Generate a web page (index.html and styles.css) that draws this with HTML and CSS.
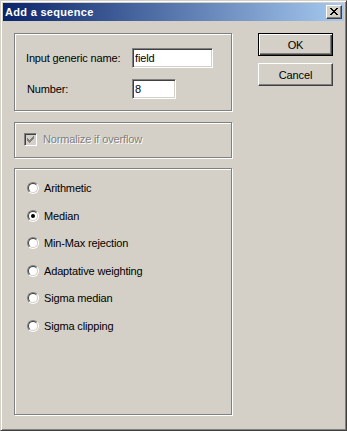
FILE: index.html
```html
<!DOCTYPE html>
<html lang="en">
<head>
  <meta charset="UTF-8" />
  <title>Add a sequence</title>
  <link rel="stylesheet" href="styles.css">
</head>
<body>

<div class="window">
  <div class="titlebar">
    <span class="title">Add a sequence</span>
    <span class="close-btn">
      <svg width="8" height="7" viewBox="0 0 8 7" shape-rendering="crispEdges">
        <path fill="#000" d="M0 0h2v1h-2z M6 0h2v1h-2z M1 1h2v1h-2z M5 1h2v1h-2z M2 2h4v1h-4z M3 3h2v1h-2z M2 4h4v1h-4z M1 5h2v1h-2z M5 5h2v1h-2z M0 6h2v1h-2z M6 6h2v1h-2z"/>
      </svg>
    </span>
  </div>

  <div class="client">
    <div class="left-col">
      <div class="group group-names">
        <div class="field-row">
          <label class="field-label">Input generic name:</label>
          <input class="textbox textbox-wide" type="text" value="field">
        </div>
        <div class="field-row">
          <label class="field-label label-number">Number:</label>
          <input class="textbox textbox-short" type="text" value="8">
        </div>
      </div>

      <div class="group group-check">
        <span class="checkbox">
          <svg width="7" height="7" viewBox="0 0 7 7" shape-rendering="crispEdges">
            <path fill="#808080" d="M6 0h1v1h-1z M5 1h2v1h-2z M0 2h1v1h-1z M4 2h3v1h-3z M0 3h2v1h-2z M3 3h3v1h-3z M0 4h5v1h-5z M1 5h3v1h-3z M2 6h1v1h-1z"/>
          </svg>
        </span>
        <span class="disabled-label">Normalize if overflow</span>
      </div>

      <div class="group group-methods">
        <div class="radio-row"><span class="radio"><span class="radio-inner"></span></span><span>Arithmetic</span></div>
        <div class="radio-row"><span class="radio"><span class="radio-inner"><span class="radio-dot"></span></span></span><span>Median</span></div>
        <div class="radio-row"><span class="radio"><span class="radio-inner"></span></span><span>Min-Max rejection</span></div>
        <div class="radio-row"><span class="radio"><span class="radio-inner"></span></span><span>Adaptative weighting</span></div>
        <div class="radio-row"><span class="radio"><span class="radio-inner"></span></span><span>Sigma median</span></div>
        <div class="radio-row"><span class="radio"><span class="radio-inner"></span></span><span>Sigma clipping</span></div>
      </div>
    </div>

    <div class="right-col">
      <button class="btn btn-default">OK</button>
      <button class="btn">Cancel</button>
    </div>
  </div>
</div>

</body>
</html>
```

FILE: styles.css
```css
body {
  margin: 0;
  padding: 0;
  font-family: 'Liberation Sans', Arial, sans-serif;
  font-size: 11px;
  letter-spacing: -0.15px;
  color: #000;
  background: #d4d0c8;
}

.window {
  width: 347px;
  height: 431px;
  box-sizing: border-box;
  background: #d4d0c8;
  border: 1px solid;
  border-color: #d4d0c8 #404040 #404040 #d4d0c8;
  box-shadow: inset 1px 1px #fff, inset -1px -1px #808080;
  padding: 2px;
  display: flex;
  flex-direction: column;
}

.titlebar {
  height: 18px;
  background: linear-gradient(to right, #0a246a, #a6caf0);
  display: flex;
  align-items: center;
  justify-content: space-between;
  padding: 0 2px 0 2px;
}

.title {
  color: #fff;
  font-weight: bold;
  font-size: 11px;
  letter-spacing: 0.3px;
}

.close-btn {
  width: 16px;
  height: 14px;
  box-sizing: border-box;
  background: #d4d0c8;
  border: 1px solid;
  border-color: #fff #404040 #404040 #fff;
  box-shadow: inset -1px -1px #808080;
  display: flex;
  align-items: center;
  justify-content: center;
  padding: 0 1px 1px 0;
}

.close-btn svg {
  display: block;
}

.client {
  display: flex;
  padding: 12px 0 0 11px;
}

.left-col {
  width: 218px;
  display: flex;
  flex-direction: column;
}

.group {
  box-sizing: border-box;
  border: 1px solid #808080;
  box-shadow: inset 1px 1px #fff, 1px 1px #fff;
}

.group-names {
  height: 78px;
  padding: 14px 0 0 11px;
  display: flex;
  flex-direction: column;
  gap: 11px;
}

.field-row {
  display: flex;
  align-items: center;
  height: 20px;
}

.field-label {
  width: 106px;
}

.label-number {
  padding-left: 1px;
  width: 105px;
}

.textbox {
  box-sizing: border-box;
  height: 20px;
  margin: 0;
  padding: 0 0 0 2px;
  border: 1px solid;
  border-color: #808080 #fff #fff #808080;
  box-shadow: inset 1px 1px #404040, inset -1px -1px #d4d0c8;
  background: #fff;
  font-family: inherit;
  font-size: 11px;
  letter-spacing: inherit;
  color: #000;
  outline: none;
}

.textbox-wide {
  width: 81px;
}

.textbox-short {
  width: 44px;
}

.group-check {
  margin-top: 11px;
  height: 36px;
  padding: 10px 0 0 9px;
  display: flex;
  align-items: flex-start;
  gap: 6px;
}

.checkbox {
  width: 13px;
  height: 13px;
  box-sizing: border-box;
  border: 1px solid;
  border-color: #808080 #fff #fff #808080;
  box-shadow: inset 1px 1px #404040, inset -1px -1px #d4d0c8;
  background: #d4d0c8;
  display: flex;
  padding: 2px 0 0 2px;
}

.checkbox svg {
  display: block;
}

.disabled-label {
  color: #808080;
  text-shadow: 1px 1px #fff;
  line-height: 13px;
}

.group-methods {
  margin-top: 10px;
  height: 247px;
  padding: 13px 0 0 12px;
  display: flex;
  flex-direction: column;
  gap: 15.6px;
}

.radio-row {
  display: flex;
  align-items: center;
  height: 12px;
  gap: 5px;
}

.radio {
  width: 12px;
  height: 12px;
  box-sizing: border-box;
  border-radius: 50%;
  border: 1px solid;
  border-color: #808080 #fff #fff #808080;
  flex-shrink: 0;
}

.radio-inner {
  display: flex;
  align-items: center;
  justify-content: center;
  width: 10px;
  height: 10px;
  box-sizing: border-box;
  border-radius: 50%;
  border: 1px solid;
  border-color: #404040 #d4d0c8 #d4d0c8 #404040;
  background: #fff;
}

.radio-dot {
  width: 4px;
  height: 4px;
  border-radius: 50%;
  background: #000;
}

.right-col {
  margin-left: 26px;
  display: flex;
  flex-direction: column;
  gap: 7px;
}

.btn {
  width: 75px;
  height: 23px;
  box-sizing: border-box;
  margin: 0;
  padding: 0;
  background: #d4d0c8;
  border: 1px solid;
  border-color: #fff #404040 #404040 #fff;
  box-shadow: inset -1px -1px #808080;
  font-family: inherit;
  font-size: 11px;
  letter-spacing: inherit;
  color: #000;
}

.btn-default {
  border-color: #000;
  box-shadow: inset 1px 1px #fff, inset -1px -1px #404040, inset -2px -2px #808080;
}
```
